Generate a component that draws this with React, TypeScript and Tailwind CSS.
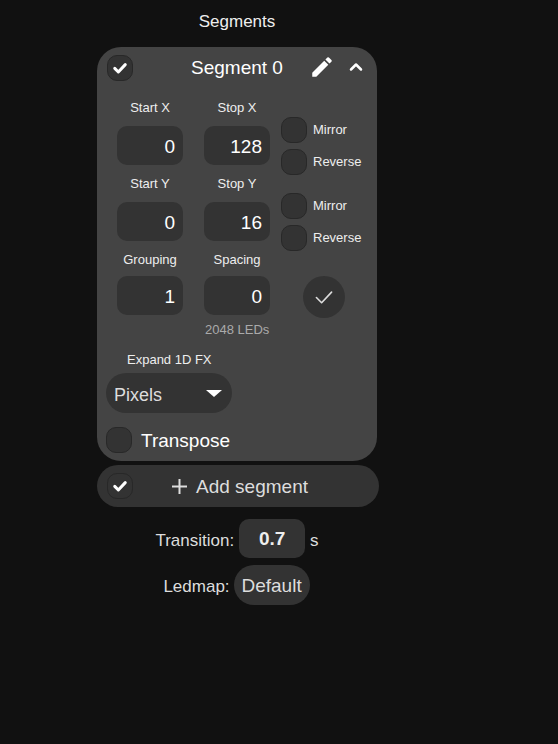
import { ChevronUp } from 'lucide-react';

const FONT = "font-['Liberation_Sans',Arial,sans-serif]";

function CheckIcon({ className }: { className: string }) {
  return (
    <svg viewBox="0 0 24 24" className={className} fill="none" stroke="currentColor" strokeLinecap="round" strokeLinejoin="round">
      <path d="M5 12.5l4.8 4.8L19 7.5" />
    </svg>
  );
}

function Box({ checked }: { checked?: boolean }) {
  return (
    <div className="flex h-[26px] w-[26px] shrink-0 items-center justify-center rounded-[10px] border border-[#282828] bg-[#333]">
      {checked && <CheckIcon className="h-[18px] w-[18px] stroke-[4] text-white" />}
    </div>
  );
}

function Field({ label, value, labelGap }: { label: string; value: string; labelGap: string }) {
  return (
    <div className="flex w-[66px] flex-col items-center">
      <div className={`h-[16px] whitespace-nowrap text-[13px] leading-[16px] text-[#eee] ${labelGap}`}>{label}</div>
      <div className="h-[39px] w-[66px] rounded-[10px] bg-[#333] pr-[8px] text-right text-[19px] leading-[41px] text-white">
        {value}
      </div>
    </div>
  );
}

function Toggle({ label }: { label: string }) {
  return (
    <div className="flex h-[26px] items-center gap-[6px]">
      <Box />
      <span className="text-[13px] text-[#eee]">{label}</span>
    </div>
  );
}

function AxisRow({ a, b, av, bv, mt }: { a: string; b: string; av: string; bv: string; mt: string }) {
  return (
    <div className={`flex pl-[20px] ${mt}`}>
      <Field label={a} value={av} labelGap="mb-[10px]" />
      <div className="ml-[21px]">
        <Field label={b} value={bv} labelGap="mb-[10px]" />
      </div>
      <div className="ml-[11px] mt-[17px] flex flex-col gap-[6px]">
        <Toggle label="Mirror" />
        <Toggle label="Reverse" />
      </div>
    </div>
  );
}

export default function App() {
  return (
    <div className={`h-[744px] w-[558px] overflow-hidden bg-[#111] ${FONT}`}>
      <div className="flex w-[474px] flex-col items-center">
        <div className="mt-[12px] h-[19px] text-[17px] leading-[19px] text-[#eee]">Segments</div>

        {/* Segment card */}
        <div className="mt-[16px] h-[414px] w-[280px] rounded-[24px] bg-[#444]">
          <div className="relative flex h-[40px] items-center justify-center pt-[2px]">
            <div className="absolute left-[10px] top-[8px]">
              <Box checked />
            </div>
            <span className="text-[19px] leading-[22px] text-white">Segment 0</span>
            <svg viewBox="0 0 24 24" className="absolute left-[212px] top-[7px] h-[26px] w-[26px] text-white" fill="currentColor">
              <path d="M3 17.25V21h3.75L17.81 9.94l-3.75-3.75L3 17.25zM20.71 7.04a1 1 0 0 0 0-1.41l-2.34-2.34a1 1 0 0 0-1.41 0l-1.83 1.83 3.75 3.75 1.83-1.83z" />
            </svg>
            <ChevronUp className="absolute left-[249px] top-[10px] h-[20px] w-[20px] text-white" strokeWidth={3} />
          </div>

          <AxisRow a="Start X" b="Stop X" av="0" bv="128" mt="mt-[13px]" />
          <AxisRow a="Start Y" b="Stop Y" av="0" bv="16" mt="mt-[1px]" />

          <div className="mt-[1px] flex pl-[20px]">
            <Field label="Grouping" value="1" labelGap="mb-[8px]" />
            <div className="ml-[21px]">
              <Field label="Spacing" value="0" labelGap="mb-[8px]" />
            </div>
            <div className="ml-[33px] mt-[24px] flex h-[42px] w-[42px] items-center justify-center rounded-full bg-[#333]">
              <CheckIcon className="h-[26px] w-[26px] stroke-[1.5] text-[#ddd]" />
            </div>
          </div>

          <div className="mt-[4px] pl-[108px] text-[13px] leading-[16px] text-[#aaa]">2048 LEDs</div>

          <div className="mt-[14px] pl-[30px] text-[13px] leading-[16px] text-[#eee]">Expand 1D FX</div>

          <div className="ml-[9px] mt-[5px] flex h-[40px] w-[126px] items-center justify-between rounded-[20px] bg-[#333] pl-[8px] pr-[10px]">
            <span className="pt-[4px] text-[18px] text-[#ddd]">Pixels</span>
            <div className="h-0 w-0 border-x-[8px] border-t-[7px] border-x-transparent border-t-white" />
          </div>

          <div className="ml-[9px] mt-[13px] flex items-center gap-[9px]">
            <Box />
            <span className="pt-[2px] text-[19px] leading-[26px] text-white">Transpose</span>
          </div>
        </div>

        {/* Add segment */}
        <div className="relative ml-[2px] mt-[4px] flex h-[42px] w-[282px] items-center justify-center rounded-[21px] bg-[#333] pl-[4px]">
          <div className="absolute left-[10px] top-[8px]">
            <Box checked />
          </div>
          <svg viewBox="0 0 15 15" className="mr-[9px] h-[15px] w-[15px] text-[#ddd]" stroke="currentColor" strokeWidth="2">
            <path d="M7.5 0v15M0 7.5h15" />
          </svg>
          <span className="pt-[2px] text-[19px] text-[#ddd]">Add segment</span>
        </div>

        {/* Transition */}
        <div className="mt-[12px] flex h-[39px] items-center">
          <span className="pt-[4px] text-[17px] text-[#ddd]">Transition:</span>
          <div className="ml-[5px] h-[39px] w-[66px] rounded-[10px] bg-[#333] text-center text-[19px] font-bold leading-[39px] text-[#eee]">
            0.7
          </div>
          <span className="ml-[5px] pt-[4px] text-[17px] text-[#ddd]">s</span>
        </div>

        {/* Ledmap */}
        <div className="mr-[1px] mt-[7px] flex h-[40px] items-center">
          <span className="pt-[4px] text-[17px] text-[#ddd]">Ledmap:</span>
          <div className="ml-[4px] flex h-[40px] w-[76px] items-center justify-center rounded-[20px] bg-[#333] pt-[2px] text-[19px] text-[#ddd]">
            Default
          </div>
        </div>
      </div>
    </div>
  );
}
